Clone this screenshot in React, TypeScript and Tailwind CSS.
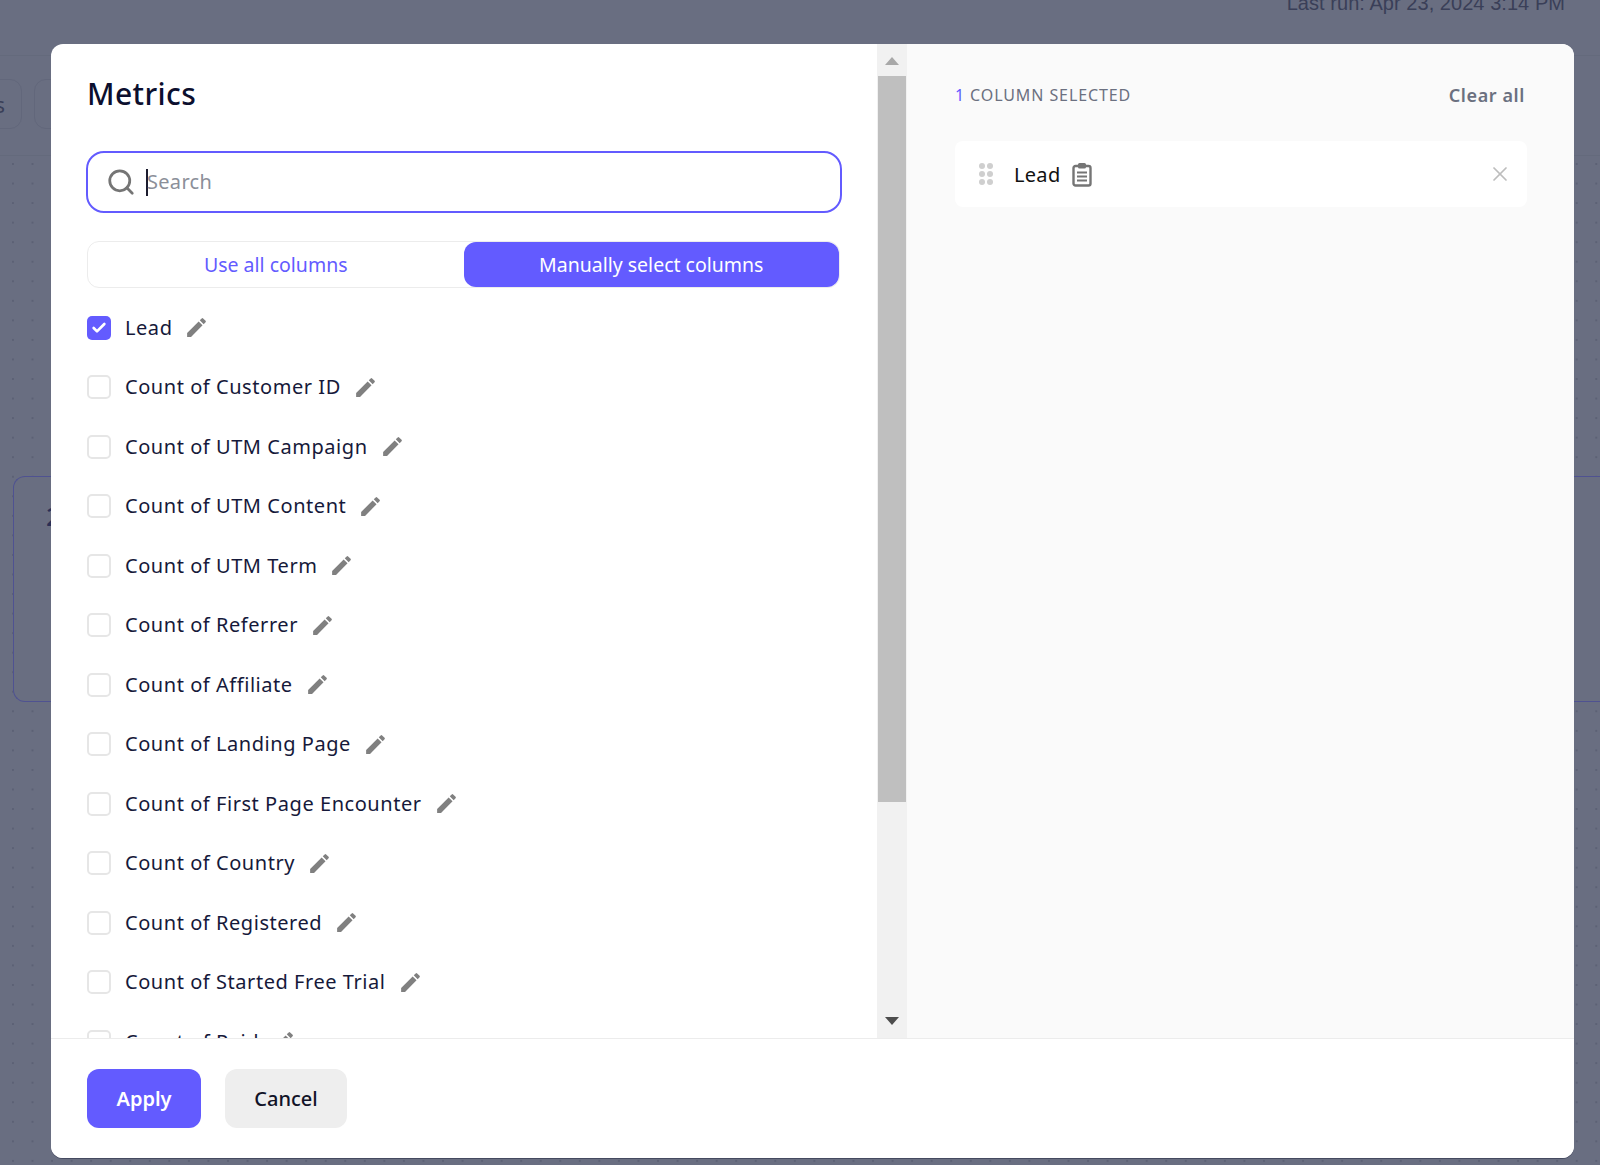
import React from "react";
import { Check, Search, X } from "lucide-react";
import { MdEdit } from "react-icons/md";

const columns = [
  "Lead",
  "Count of Customer ID",
  "Count of UTM Campaign",
  "Count of UTM Content",
  "Count of UTM Term",
  "Count of Referrer",
  "Count of Affiliate",
  "Count of Landing Page",
  "Count of First Page Encounter",
  "Count of Country",
  "Count of Registered",
  "Count of Started Free Trial",
  "Count of Paid",
];

function ClipboardIcon() {
  return (
    <svg width="20" height="25" viewBox="0 0 20 25" fill="none" stroke="#757575" strokeWidth="2.4">
      <rect x="1.5" y="4" width="17" height="19.5" rx="2" />
      <rect x="6" y="1" width="8" height="5.5" rx="1.5" fill="#757575" stroke="none" />
      <path d="M5 10.5h10M5 14.5h10M5 18.5h10" strokeWidth="2" />
    </svg>
  );
}

function Row({ label, checked }: { label: string; checked?: boolean }) {
  return (
    <div className="flex h-[59.5px] shrink-0 items-center">
      {checked ? (
        <span className="flex h-6 w-6 items-center justify-center rounded-[5px] bg-[#635bff] text-white">
          <Check size={16} strokeWidth={4} />
        </span>
      ) : (
        <span className="h-6 w-6 rounded-[5px] border-2 border-[#e6e6e6] bg-white" />
      )}
      <span className="ml-[14px] text-[20px] tracking-[0.55px] text-[#16193a]">{label}</span>
      <MdEdit size={25} className="ml-[12px] text-[#808080]" />
    </div>
  );
}

export default function App() {
  return (
    <div className="relative h-[1165px] overflow-hidden bg-[#696e81] font-['Noto_Sans',sans-serif]">
      {/* page behind the dialog */}
      <div className="h-[56px] overflow-hidden border-b border-[#646a7c]">
        <p className="-mt-[12px] pr-[35px] text-right font-['Liberation_Sans',sans-serif] text-[20px] tracking-[0.05px] text-[#3a3f58]">
          Last run: Apr 23, 2024 3:14 PM
        </p>
      </div>
      <div className="flex h-[100px] items-center gap-3 border-b border-[#646a7c] pb-[3px]">
        <div className="ml-[-60px] flex h-[50px] w-[82px] items-center justify-end rounded-xl border border-[#62677b] pr-[16px] text-[22px] text-[#3a3f58]">
          s
        </div>
        <div className="h-[50px] w-[82px] rounded-xl border border-[#62677b]" />
      </div>
      <div className="h-[1009px] bg-[radial-gradient(circle,#5c6175_1px,transparent_1.2px)] bg-[length:19.56px_19.56px] bg-[position:3.2px_-1.8px] pt-[320px]">
        <div className="ml-[13px] h-[226px] rounded-l-xl border-y border-l border-[#4f5291] bg-[#696e81] pl-[32px] pt-[20px] text-[26px] font-medium text-[#2b2f55]">
          2
        </div>
      </div>

      {/* dialog */}
      <div className="absolute left-[51px] top-[44px] flex h-[1114px] w-[1523px] flex-col overflow-hidden rounded-xl bg-white shadow-[0_1px_0_#454a60]">
        <div className="flex min-h-0 flex-1">
          <div className="flex w-[826px] flex-col overflow-hidden pl-[36px] pr-[36px]">
            <h2 className="mt-[28px] text-[30px] leading-[44px] font-medium tracking-[0.4px] text-[#0c0f2e]">Metrics</h2>
            <div className="-ml-[1px] mt-[35px] flex h-[62px] w-[756px] shrink-0 items-center rounded-[18px] border-2 border-[#635bff] pl-[18px]">
              <Search size={30} strokeWidth={2.2} className="text-[#757575]" />
              <span className="ml-[10px] h-[27px] w-[2px] bg-[#1c1c2e]" />
              <span className="-ml-[1px] text-[20px] tracking-[0.3px] text-[#8b8f99]">Search</span>
            </div>
            <div className="mt-[28px] flex h-[47px] w-[753px] shrink-0 items-stretch rounded-xl border border-[#ececec]">
              <div className="flex w-[376px] items-center justify-center text-[19.5px] text-[#635bff]">Use all columns</div>
              <div className="flex w-[376px] items-center justify-center rounded-xl bg-[#635bff] text-[19.5px] text-white">
                Manually select columns
              </div>
            </div>
            <div className="mt-[10px] flex flex-col">
              {columns.map((c, i) => (
                <Row key={c} label={c} checked={i === 0} />
              ))}
            </div>
          </div>

          {/* scrollbar */}
          <div className="flex w-[30px] flex-col bg-[#f1f1f1]">
            <div className="flex h-[32px] items-center justify-center">
              <span className="mt-[2px] h-0 w-0 border-x-[7px] border-b-[8px] border-x-transparent border-b-[#a8a8a8]" />
            </div>
            <div className="mx-[1px] h-[726px] bg-[#bfbfbf]" />
            <div className="flex-1" />
            <div className="flex h-[33px] items-center justify-center">
              <span className="mb-[1px] h-0 w-0 border-x-[7px] border-t-[8px] border-x-transparent border-t-[#4d4d4d]" />
            </div>
          </div>

          {/* selected columns */}
          <div className="flex-1 bg-[#fafafa] pl-[48px] pr-[47px] pt-[38px]">
            <div className="flex h-[26px] items-center justify-between pr-[2px]">
              <span className="text-[16px] tracking-[0.9px] text-[#6b7080]">
                <span className="mr-[5px] text-[#635bff]">1</span>COLUMN SELECTED
              </span>
              <span className="text-[18px] font-semibold tracking-[0.6px] text-[#6b7080]">Clear all</span>
            </div>
            <div className="mt-[33px] flex h-[66px] items-center rounded-lg bg-white pl-[24px] pr-[15px]">
              <div className="grid grid-cols-2 gap-x-[2px] gap-y-[2px]">
                {[0, 1, 2, 3, 4, 5].map((d) => (
                  <span key={d} className="h-[6px] w-[6px] rounded-full bg-[#cfcfcf]" />
                ))}
              </div>
              <span className="ml-[21px] mt-[1px] text-[20px] tracking-[0.3px] text-[#111]">Lead</span>
              <span className="ml-[12px] flex">
                <ClipboardIcon />
              </span>
              <X size={24} strokeWidth={1.7} className="ml-auto text-[#bdbdbd]" />
            </div>
          </div>
        </div>

        <div className="flex h-[120px] shrink-0 gap-6 border-t border-[#ececec] bg-white pl-[36px] pt-[30px]">
          <button className="h-[59px] w-[114px] rounded-xl bg-[#635bff] text-[20px] font-semibold text-white">Apply</button>
          <button className="h-[59px] w-[122px] rounded-xl bg-[#eeeeee] text-[20px] font-medium text-[#111327]">Cancel</button>
        </div>
      </div>
    </div>
  );
}
